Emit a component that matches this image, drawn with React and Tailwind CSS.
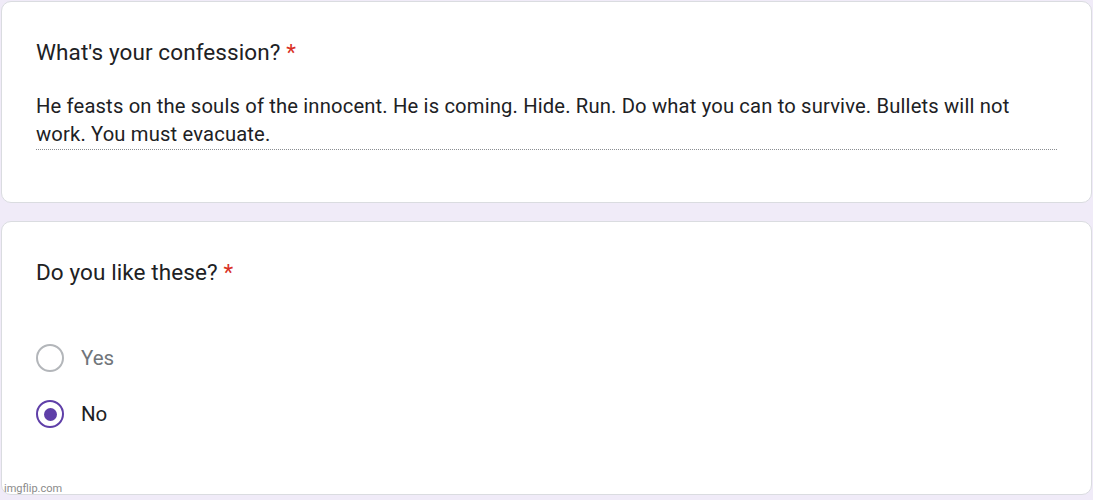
import React from 'react';

const font = { fontFamily: 'Roboto, "Liberation Sans", sans-serif' };

function Radio({ label, checked }) {
  return (
    <div className="flex items-center h-[28px]">
      {checked ? (
        <span className="w-[28px] h-[28px] rounded-full border-[2.5px] border-[#5f3fa8] flex items-center justify-center">
          <span className="w-[13px] h-[13px] rounded-full bg-[#5f3fa8]" />
        </span>
      ) : (
        <span className="w-[28px] h-[28px] rounded-full border-[2.5px] border-[#b3b6ba]" />
      )}
      <span className={`ml-[17px] text-[20.5px] ${checked ? 'text-[#202124]' : 'text-[#70757a]'}`}>{label}</span>
    </div>
  );
}

export default function App() {
  return (
    <div className="relative w-[1093px] h-[500px] bg-[#f0ebf8] px-px pt-px overflow-hidden" style={font}>
      <div className="bg-white border border-[#dadce0] rounded-[10px] h-[202px] pl-[34px] pr-[34px] pt-[35px]">
        <div className="text-[22.5px] text-[#202124] leading-[30px] tracking-[0.1px]">
          What's your confession? <span className="text-[#d93025]">*</span>
        </div>
        <div className="mt-[25px] text-[20.2px] leading-[28px] tracking-[0.16px] text-[#202124] border-b border-dotted border-[#8a8d91] pb-[1px]">
          He feasts on the souls of the innocent. He is coming. Hide. Run. Do what you can to survive. Bullets will not work. You must evacuate.
        </div>
      </div>

      <div className="mt-[18px] bg-white border border-[#dadce0] rounded-[10px] h-[274px] pl-[34px] pt-[35px]">
        <div className="text-[22.5px] text-[#202124] leading-[30px] tracking-[0.1px]">
          Do you like these? <span className="text-[#d93025]">*</span>
        </div>
        <div className="mt-[57px] flex flex-col gap-[28px]">
          <Radio label="Yes" />
          <Radio label="No" checked />
        </div>
      </div>

      <div className="absolute left-[4px] bottom-[3px] text-[11px] text-[#8a8a8a]">imgflip.com</div>
    </div>
  );
}
